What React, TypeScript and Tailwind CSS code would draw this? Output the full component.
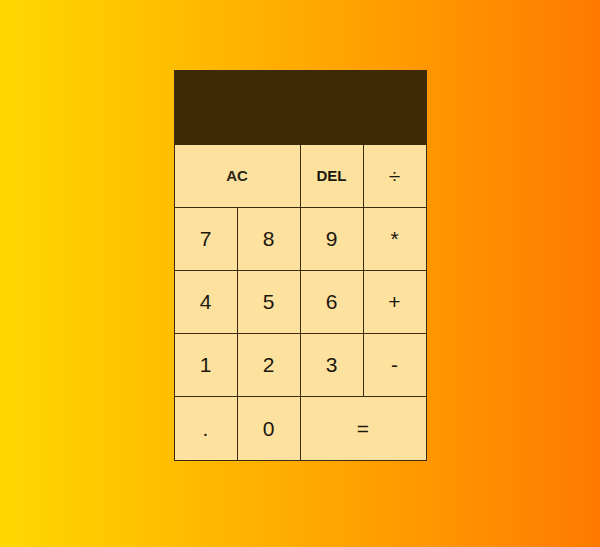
import { useState } from 'react';

const keys: { label: string; span?: boolean; small?: boolean; bold?: boolean }[] = [
  { label: 'AC', span: true, small: true, bold: true },
  { label: 'DEL', small: true, bold: true },
  { label: '÷' },
  { label: '7' },
  { label: '8' },
  { label: '9' },
  { label: '*' },
  { label: '4' },
  { label: '5' },
  { label: '6' },
  { label: '+' },
  { label: '1' },
  { label: '2' },
  { label: '3' },
  { label: '-' },
  { label: '.' },
  { label: '0' },
  { label: '=', span: true },
];

export default function App() {
  const [current, setCurrent] = useState('');

  const press = (k: string) => {
    if (k === 'AC') return setCurrent('');
    if (k === 'DEL') return setCurrent(current.slice(0, -1));
    if (k === '=') return;
    setCurrent(current + k);
  };

  return (
    <div
      className="min-h-screen w-full bg-gradient-to-r from-[#ffd700] to-[#ff7a00] flex justify-center pt-[70px]"
      style={{ fontFamily: '"Liberation Sans", Arial, sans-serif' }}
    >
      <div className="grid grid-cols-[repeat(4,62px)] grid-rows-[73px_repeat(4,62px)_63px] gap-px p-px bg-[#3a2a0e] h-fit">
        <div className="col-span-4 bg-[#402a04] flex items-end justify-end px-2 pb-2 text-white text-2xl">
          {current}
        </div>
        {keys.map(k => (
          <button
            key={k.label}
            onClick={() => press(k.label)}
            className={`bg-[#fde29f] cursor-pointer ${k.span ? 'col-span-2' : ''} ${
              k.small ? 'text-[15px]' : 'text-[21px]'
            } ${k.bold ? 'font-bold' : ''} ${k.label === 'AC' ? 'text-[#2c2618]' : 'text-[#1c170d]'}`}
          >
            {k.label}
          </button>
        ))}
      </div>
    </div>
  );
}
